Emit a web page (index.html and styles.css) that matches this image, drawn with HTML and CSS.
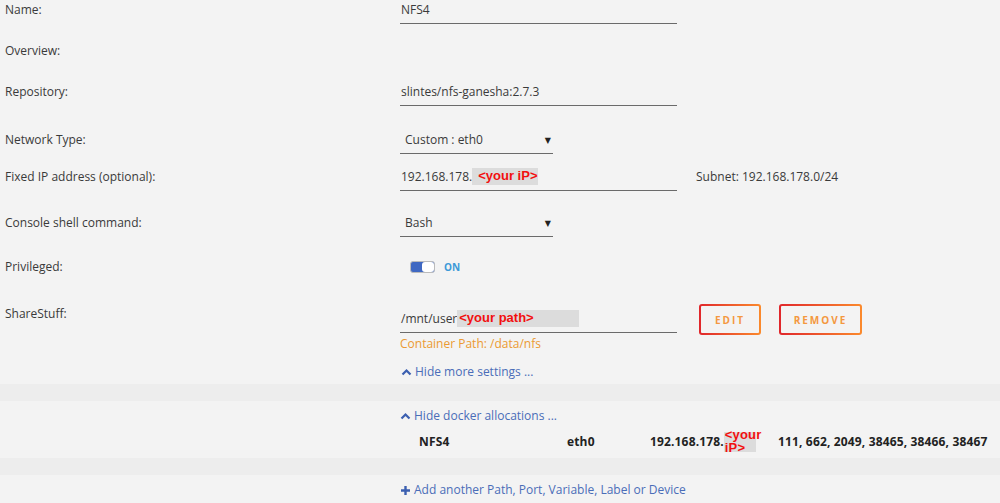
FILE: index.html
```html
<!DOCTYPE html>
<html lang="en">
<head>
  <meta charset="UTF-8">
  <title>Update Container</title>
  <link rel="stylesheet" href="styles.css">
</head>
<body>
  <div class="form">
    <div class="row r-name">
      <div class="label">Name:</div>
      <div class="value"><div class="field">NFS4</div></div>
    </div>
    <div class="row r-overview">
      <div class="label">Overview:</div>
      <div class="value"></div>
    </div>
    <div class="row r-repo">
      <div class="label">Repository:</div>
      <div class="value"><div class="field">slintes/nfs-ganesha:2.7.3</div></div>
    </div>
    <div class="row r-net">
      <div class="label">Network Type:</div>
      <div class="value"><div class="select">Custom : eth0<span class="arrow">&#9660;</span></div></div>
    </div>
    <div class="row r-ip">
      <div class="label">Fixed IP address (optional):</div>
      <div class="value">
        <div class="field">192.168.178.<span class="mask"><b class="red">&lt;your iP&gt;</b></span></div>
        <span class="subnet">Subnet: 192.168.178.0/24</span>
      </div>
    </div>
    <div class="row r-shell">
      <div class="label">Console shell command:</div>
      <div class="value"><div class="select">Bash<span class="arrow">&#9660;</span></div></div>
    </div>
    <div class="row r-priv">
      <div class="label">Privileged:</div>
      <div class="value">
        <span class="toggle"><span class="knob"></span></span>
        <span class="on">ON</span>
      </div>
    </div>
    <div class="row r-share">
      <div class="label">ShareStuff:</div>
      <div class="value">
        <div class="stack">
          <div class="field">/mnt/user<span class="mask wide"><b class="red">&lt;your path&gt;</b></span></div>
          <div class="hint">Container Path: /data/nfs</div>
          <a class="link more">
            <svg width="11" height="8" viewBox="0 0 11 8"><path d="M1.5 6.5 L5.5 2.5 L9.5 6.5" fill="none" stroke="#3b5fb0" stroke-width="2.2"/></svg>
            Hide more settings ...
          </a>
        </div>
        <button class="btn edit">EDIT</button>
        <button class="btn remove">REMOVE</button>
      </div>
    </div>
  </div>

  <div class="band"></div>

  <div class="alloc">
    <a class="link">
      <svg width="11" height="8" viewBox="0 0 11 8"><path d="M1.5 6.5 L5.5 2.5 L9.5 6.5" fill="none" stroke="#3b5fb0" stroke-width="2.2"/></svg>
      Hide docker allocations ...
    </a>
    <div class="alloc-row">
      <span class="c-name">NFS4</span>
      <span class="c-net">eth0</span>
      <span class="c-ip">192.168.178.<span class="mask tall"><b class="red">&lt;your<br>iP&gt;</b></span></span>
      <span class="c-ports">111, 662, 2049, 38465, 38466, 38467</span>
    </div>
  </div>

  <div class="band"></div>

  <div class="add">
    <a class="link">
      <svg width="11" height="11" viewBox="0 0 11 11"><path d="M5.5 1 V10 M1 5.5 H10" fill="none" stroke="#3b5fb0" stroke-width="2.4"/></svg>
      Add another Path, Port, Variable, Label or Device
    </a>
  </div>
</body>
</html>
```

FILE: styles.css
```css
body {
  margin: 0;
  background: #f3f3f3;
  font-family: "Open Sans", "DejaVu Sans", sans-serif;
  font-size: 12px;
  color: #3a3a3a;
  line-height: 20px;
}
.form {
  padding-left: 5px;
}
.row {
  display: grid;
  grid-template-columns: 395px 1fr;
}
.r-name { height: 41px; }
.r-overview { height: 41px; }
.r-repo { height: 48px; }
.r-net { height: 37px; }
.r-ip { height: 46px; }
.r-shell { height: 44px; }
.r-priv { height: 46px; }
.r-share { height: 80px; padding-top: 1px; }
.value {
  display: flex;
  align-items: flex-start;
}
.field {
  width: 277px;
  height: 24px;
  padding-left: 1px;
  border-bottom: 1px solid #6a6a6a;
  box-sizing: border-box;
  white-space: nowrap;
}
.select {
  width: 153px;
  height: 24px;
  padding-left: 5px;
  border-bottom: 1px solid #6a6a6a;
  box-sizing: border-box;
  position: relative;
}
.arrow {
  position: absolute;
  right: 2px;
  top: 0;
  font-size: 8px;
  color: #222;
}
.mask {
  display: inline-block;
  background: #dcdcdc;
  height: 17px;
  line-height: 15px;
  vertical-align: top;
  margin-top: 1px;
  padding-left: 6px;
  width: 66px;
  box-sizing: border-box;
}
.mask.wide {
  width: 122px;
  padding-left: 2px;
}
.red {
  color: #f20f0f;
  font-weight: bold;
  font-size: 13px;
  font-family: "Liberation Sans", sans-serif;
}
.subnet {
  margin-left: 19px;
}
.toggle {
  display: inline-block;
  width: 25px;
  height: 12px;
  margin: 4px 0 0 10px;
  border: 1px solid #bbb;
  border-radius: 3px;
  background: #3f68c2;
  box-sizing: border-box;
  position: relative;
}
.knob {
  position: absolute;
  right: 0;
  top: 0;
  width: 12px;
  height: 10px;
  background: #fff;
  border-radius: 3px;
}
.on {
  margin-left: 9px;
  font-size: 10px;
  font-weight: bold;
  color: #3d9ad8;
  line-height: 20px;
}
.stack {
  display: flex;
  flex-direction: column;
  margin-top: 5px;
}
.hint {
  color: #eb9a32;
  padding-top: 1px;
  height: 28px;
}
.link {
  color: #4a6db8;
  display: inline-flex;
  align-items: center;
  gap: 3px;
}
.more {
  margin-left: 1px;
}
.btn {
  height: 31px;
  border: 2px solid transparent;
  border-radius: 3px;
  background: linear-gradient(#f3f3f3, #f3f3f3) padding-box,
              linear-gradient(90deg, #e0262b, #fb8a2c) border-box;
  color: #f4983f;
  font-family: "Open Sans", sans-serif;
  font-weight: bold;
  font-size: 10px;
  letter-spacing: 2px;
  padding: 0;
}
.edit {
  width: 62px;
  margin-left: 22px;
}
.remove {
  width: 83px;
  margin-left: 18px;
}
.band {
  height: 17px;
  background: #ededed;
}
.alloc {
  padding: 5px 0 0 400px;
  height: 52px;
}
.alloc-row {
  display: flex;
  font-weight: bold;
  color: #222;
  height: 32px;
  align-items: center;
  letter-spacing: 0.15px;
}
.c-name { margin-left: 19px; width: 148px; }
.c-net { width: 83px; }
.c-ip { width: 128px; display: inline-flex; align-items: center; }
.mask.tall {
  width: 32px;
  height: 28px;
  padding-left: 1px;
  line-height: 13px;
  margin-top: 0;
  background: linear-gradient(#f3f3f3 0 4px, #dcdcdc 4px 24px, #f3f3f3 24px);
}
.add {
  padding: 5px 0 0 400px;
}
```
